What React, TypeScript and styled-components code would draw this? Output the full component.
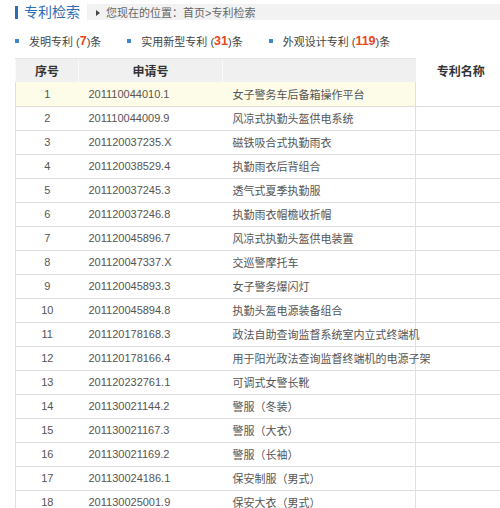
import React from "react";
import styled, { createGlobalStyle } from "styled-components";

const Global = createGlobalStyle`
  html, body { margin: 0; padding: 0; background: #fff; }
  body {
    width: 500px;
    overflow: hidden;
    font-family: "Liberation Sans", "Noto Sans CJK SC", sans-serif;
    color: #555;
  }
`;

const Page = styled.div`
  width: 500px;
  overflow: hidden;
  padding-top: 4px;
`;

const TopBar = styled.div`
  display: flex;
  align-items: center;
  height: 16px;
  padding-left: 15px;
`;

const TitleMark = styled.span`
  width: 3px;
  height: 13px;
  background: #2d6db5;
`;

const Title = styled.h1`
  margin: 0 0 0 6px;
  width: 56px;
  font-size: 14px;
  font-weight: normal;
  color: #2d6db5;
  line-height: 16px;
  white-space: nowrap;
`;

const Crumb = styled.div`
  flex: 1;
  margin-left: 7px;
  height: 16px;
  background: #f2f2f2;
  display: flex;
  align-items: center;
  padding-left: 9px;
  font-size: 11px;
  color: #666;
  white-space: nowrap;
`;

const Arrow = styled.span`
  width: 0;
  height: 0;
  border-top: 3px solid transparent;
  border-bottom: 3px solid transparent;
  border-left: 4px solid #444;
  margin: 2px 6px 0 0;
`;

const Stats = styled.div`
  display: flex;
  align-items: center;
  gap: 26px;
  padding-left: 15px;
  height: 22px;
  margin-top: 10px;
  font-size: 11px;
  color: #444;
`;

const StatItem = styled.div`
  display: flex;
  align-items: center;
  white-space: nowrap;
`;

const Bullet = styled.span`
  width: 4px;
  height: 4px;
  background: #3f86c8;
  margin-right: 10px;
`;

const Count = styled.b`
  color: #e8461c;
  font-size: 12.5px;
`;

const Table = styled.table`
  margin-top: 6px;
  margin-left: 15px;
  width: 490px;
  table-layout: fixed;
  border-collapse: collapse;
  font-size: 11px;
`;

const HeadCell = styled.th<{ $plain?: boolean }>`
  height: 23px;
  padding: 0;
  font-size: 12px;
  font-weight: bold;
  color: #333;
  text-align: center;
  background: ${(p) => (p.$plain ? "#fff" : "#f0f0f0")};
  border-top: 1px solid ${(p) => (p.$plain ? "#fff" : "#e4e4e4")};
  border-left: 1px solid ${(p) => (p.$plain ? "#f0f0f0" : "#fafafa")};
`;

const Row = styled.tr<{ $hl?: boolean }>`
  height: 24px;
  border-bottom: 1px solid #dedede;
  background: ${(p) => (p.$hl ? "#fdfce9" : "#fff")};
`;

const Cell = styled.td<{ $center?: boolean; $first?: boolean; $plain?: boolean }>`
  padding: ${(p) => (p.$center ? "0" : "0 0 0 10px")};
  text-align: ${(p) => (p.$center ? "center" : "left")};
  white-space: nowrap;
  overflow: visible;
  color: #555;
  border-left: ${(p) => (p.$first || p.$plain ? "1px solid #e0e0e0" : "none")};
  ${(p) => (p.$plain ? "background: #fff;" : "")}
`;

const rows: [string, string][] = [
  ["201110044010.1", "女子警务车后备箱操作平台"],
  ["201110044009.9", "风凉式执勤头盔供电系统"],
  ["201120037235.X", "磁铁吸合式执勤雨衣"],
  ["201120038529.4", "执勤雨衣后背组合"],
  ["201120037245.3", "透气式夏季执勤服"],
  ["201120037246.8", "执勤雨衣帽檐收折帽"],
  ["201120045896.7", "风凉式执勤头盔供电装置"],
  ["201120047337.X", "交巡警摩托车"],
  ["201120045893.3", "女子警务爆闪灯"],
  ["201120045894.8", "执勤头盔电源装备组合"],
  ["201120178168.3", "政法自助查询监督系统室内立式终端机"],
  ["201120178166.4", "用于阳光政法查询监督终端机的电源子架"],
  ["201120232761.1", "可调式女警长靴"],
  ["201130021144.2", "警服（冬装）"],
  ["201130021167.3", "警服（大衣）"],
  ["201130021169.2", "警服（长袖）"],
  ["201130024186.1", "保安制服（男式）"],
  ["201130025001.9", "保安大衣（男式）"],
];

export default function App() {
  return (
    <Page>
      <Global />
      <TopBar>
        <TitleMark />
        <Title>专利检索</Title>
        <Crumb>
          <Arrow />
          您现在的位置：首页&gt;专利检索
        </Crumb>
      </TopBar>
      <Stats>
        <StatItem>
          <Bullet />
          发明专利 (<Count>7</Count> )条
        </StatItem>
        <StatItem>
          <Bullet />
          实用新型专利 (<Count>31</Count>)条
        </StatItem>
        <StatItem>
          <Bullet />
          外观设计专利 (<Count>119</Count>)条
        </StatItem>
      </Stats>
      <Table>
        <colgroup>
          <col style={{ width: 63 }} />
          <col style={{ width: 144 }} />
          <col style={{ width: 193 }} />
          <col style={{ width: 90 }} />
        </colgroup>
        <thead>
          <tr>
            <HeadCell>序号</HeadCell>
            <HeadCell>申请号</HeadCell>
            <HeadCell />
            <HeadCell $plain>专利名称</HeadCell>
          </tr>
        </thead>
        <tbody>
          {rows.map(([no, name], i) => (
            <Row key={no} $hl={i === 0}>
              <Cell $center $first>
                {i + 1}
              </Cell>
              <Cell>{no}</Cell>
              <Cell>{name}</Cell>
              <Cell $plain />
            </Row>
          ))}
        </tbody>
      </Table>
    </Page>
  );
}
